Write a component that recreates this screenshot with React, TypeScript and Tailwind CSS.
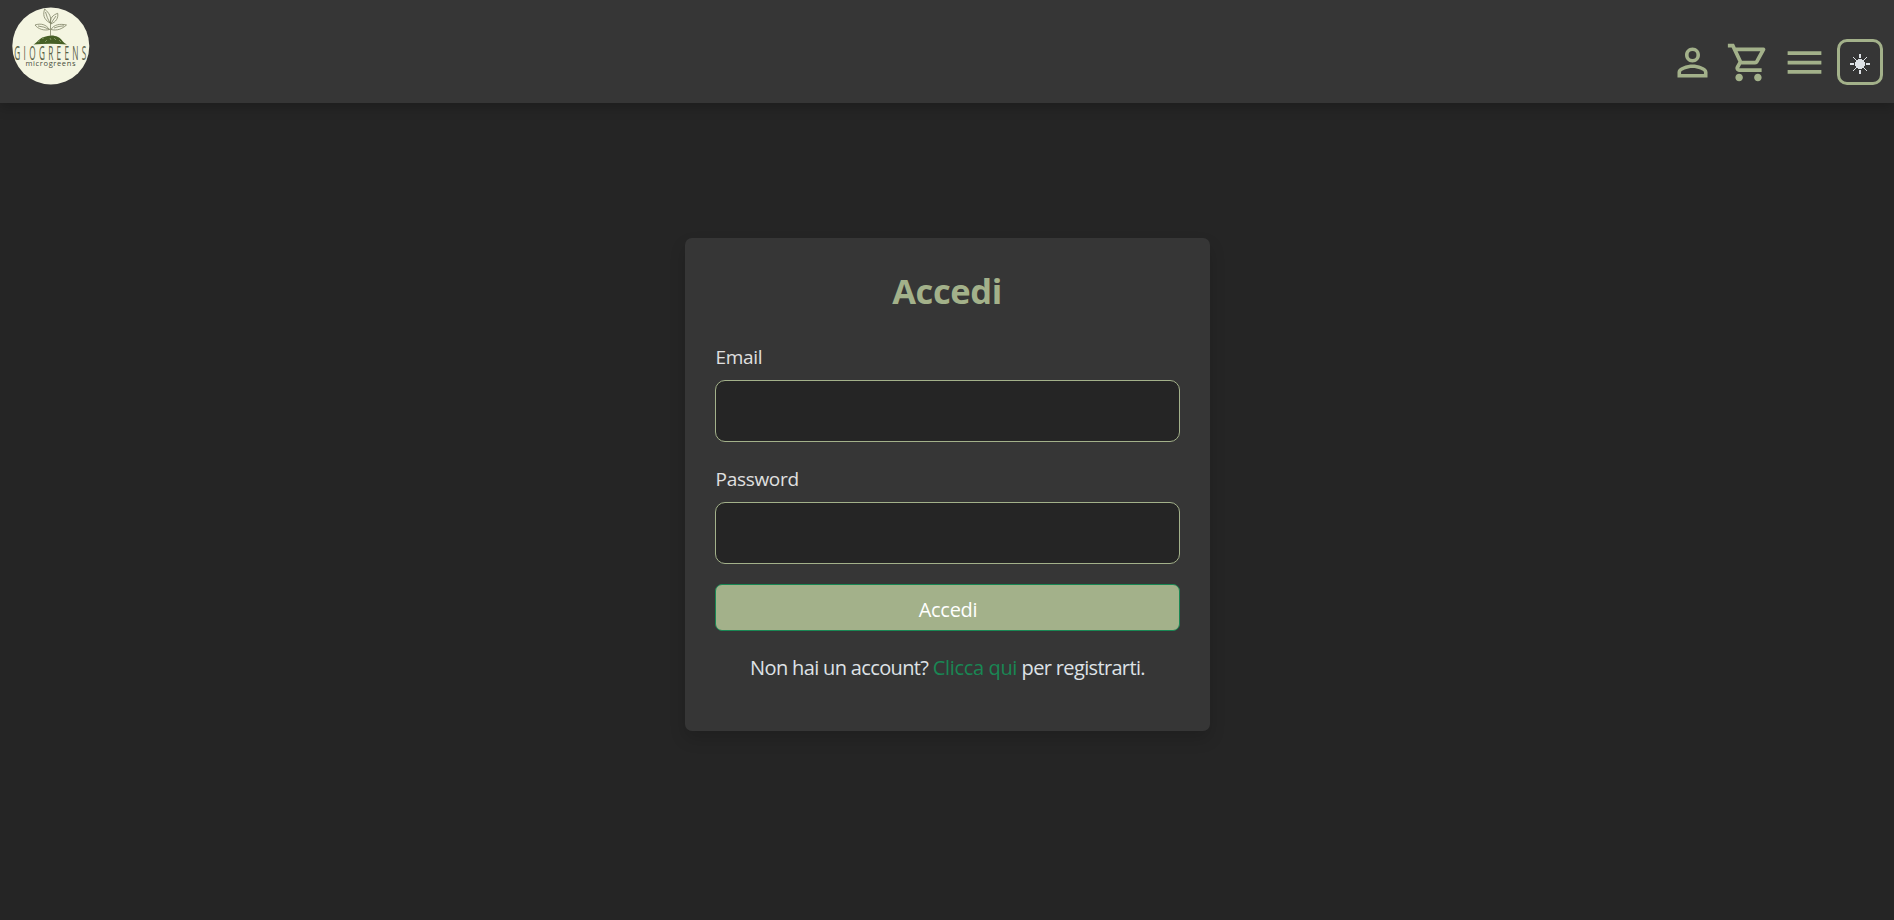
import { useState } from "react";
import { MdMenu, MdOutlineShoppingCart, MdPersonOutline } from "react-icons/md";

function Logo() {
  return (
    <svg viewBox="0 0 78 78" className="size-[78px]" aria-label="Giogreens microgreens">
      <circle cx="38.800" cy="39" r="38.500" fill="#f4f5e1" />
      <path d="M21.500 37.500C25 36 27 31 32 30C37 28 42 28 46 30C50 32 51 36 55 37.500Q38 36 21.500 37.500Z" fill="#465f25" />
      <path d="M26 35l2-1.500m2-2l2-.5m1 4l2-2m3-2l1 2m3-2l2 2m3 0l2 2" stroke="#9aab78" strokeWidth=".7" fill="none" />
      <g fill="none" stroke="#7d8265" strokeWidth=".8">
        <path d="M38.500 29V15" />
        <path d="M38 16C31 12 31 7 32.700 2C37 6 40 10 38 16ZM33.500 5Q35 11 38 16" />
        <path d="M38.800 17C37.500 11 41 8 45.700 6.300C46.500 11 44 15 38.800 17ZM44 9Q41 13 38.800 17" />
        <path d="M37.500 22.500C32 24 26 22 23 18C29 16 34 17.500 37.500 22.500ZM26 19Q32 19.500 37.500 22.500" />
        <path d="M39 22.500C42 17.500 48 16.500 54.500 18C50 22 45 24 39 22.500ZM42 21Q47 19 52 18.800" />
      </g>
      <g fontFamily="'Open Sans', sans-serif">
        <text transform="translate(2.300 52.500) scale(.4 1)" fontSize="20.500" fontWeight="400" textLength="180" fill="#5a6148">GIOGREENS</text>
        <text x="13.500" y="58.600" fontSize="7.500" fontWeight="500" textLength="50" fill="#464b3a">microgreens</text>
      </g>
    </svg>
  );
}

function Sun() {
  return (
    <svg viewBox="0 0 20 20" className="size-5" shapeRendering="crispEdges">
      <circle cx="10" cy="10" r="5" fill="#dee2e6" />
      <path d="M10 0v4M10 16v4M0 10h4M16 10h4" stroke="#dee2e6" strokeWidth="2" />
      <path d="M3 3l3 3M17 3l-3 3M3 17l3-3M17 17l-3-3" stroke="#dee2e6" strokeWidth="1" />
    </svg>
  );
}

function Field({ label, type }: { label: string; type: string }) {
  const [value, setValue] = useState("");
  return (
    <label className="mb-5 block">
      <span className="mb-2 block h-8 pt-[2px] pl-px text-[19px] leading-[30px] tracking-[-0.3px] text-[#e0e0e0]">{label}</span>
      <input
        type={type}
        value={value}
        onChange={(e) => setValue(e.target.value)}
        className="block h-[62px] w-full rounded-[10px] border border-[#a3b18a] bg-[#252525] px-4 text-[#e0e0e0] outline-none"
      />
    </label>
  );
}

export default function App() {
  return (
    <div className="flex min-h-screen flex-col bg-[#252525] font-['Open_Sans',sans-serif] text-[#dee2e6]">
      <header className="flex h-[103px] shrink-0 items-start justify-between bg-[#363636] pr-[11px] pl-[12px] shadow-[0_4px_12px_rgba(0,0,0,0.22)]">
        <a href="#" className="mt-[7px]">
          <Logo />
        </a>
        <nav className="mt-[39px] flex items-center text-[#a3b18a]">
          <MdPersonOutline className="mr-[11px] size-[45px]" />
          <MdOutlineShoppingCart className="mr-[11px] size-[45px]" />
          <MdMenu className="mr-[10.5px] size-[45px]" />
          <button className="flex size-[46px] items-center justify-center rounded-[10px] border-3 border-[#a3b18a] pt-[3px]">
            <Sun />
          </button>
        </nav>
      </header>
      <main className="flex justify-center pt-[135px]">
        <form
          onSubmit={(e) => e.preventDefault()}
          className="h-[493px] w-[525px] rounded-[7px] bg-[#363636] px-[30px] pt-[31px] shadow-[0_8px_16px_rgba(0,0,0,0.15)]"
        >
          <h1 className="mb-[27px] h-[44px] text-center text-[34.5px] leading-[44px] font-bold tracking-[-0.4px] text-[#a3b18a]">Accedi</h1>
          <Field label="Email" type="email" />
          <Field label="Password" type="password" />
          <button className="block h-[47px] w-full rounded-[7px] border border-[#198754] bg-[#a3b18a] pt-1 pl-0.5 text-[20px] tracking-[-0.3px] text-white">
            Accedi
          </button>
          <p className="mt-[22px] pl-px text-center text-[20px] leading-[30px] tracking-[-0.65px] whitespace-nowrap">
            Non hai un account?{" "}
            <a href="#" className="tracking-[-0.35px] text-[#198754]">
              Clicca qui
            </a>{" "}
            per registrarti.
          </p>
        </form>
      </main>
    </div>
  );
}
